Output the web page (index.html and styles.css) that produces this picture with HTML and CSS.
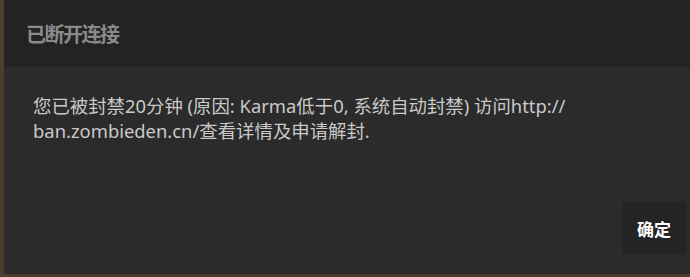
FILE: index.html
```html
<!DOCTYPE html>
<html lang="zh-CN">
<head>
  <meta charset="UTF-8" />
  <title>已断开连接</title>
  <meta name="viewport" content="width=device-width, initial-scale=1.0" />
  <link rel="stylesheet" href="styles.css">
</head>
<body>
  <div class="dialog">
    <div class="dialog-header">
      <h2>已断开连接</h2>
    </div>
    <div class="dialog-body">
      <p class="message">您已被封禁20分钟 (原因: Karma低于0, 系统自动封禁) 访问http://<wbr>ban.zombieden.cn/查看详情及申请解封.</p>
      <div class="actions">
        <button>确定</button>
      </div>
    </div>
  </div>
</body>
</html>
```

FILE: styles.css
```css
html, body {
  height: 100%;
}

body {
  margin: 0;
  background: #4b3d2f;
  font-family: "Noto Sans", "Noto Sans CJK SC", sans-serif;
  overflow: hidden;
}

.dialog {
  margin-left: 4px;
  height: 274px;
  display: flex;
  flex-direction: column;
  background: #2b2b2b;
}

.dialog-header {
  height: 67px;
  background: #232323;
  display: flex;
  align-items: center;
  padding-left: 22px;
  flex-shrink: 0;
}

.dialog-header h2 {
  margin: 0;
  font-size: 20px;
  font-weight: bold;
  letter-spacing: -1.5px;
  color: #8a8a8a;
  font-family: "Noto Sans CJK SC", sans-serif;
}

.dialog-body {
  flex: 1;
  display: flex;
  flex-direction: column;
  padding: 0 30px 0 29px;
}

.message {
  margin: 26px 0 0;
  font-size: 18.4px;
  line-height: 25px;
  color: #c9c9c9;
}

.actions {
  margin-top: auto;
  display: flex;
  justify-content: flex-end;
  margin-right: -26px;
  margin-bottom: 20px;
}

button {
  width: 64px;
  height: 52px;
  border: none;
  border-radius: 4px;
  background: #242424;
  color: #ffffff;
  font-size: 17px;
  font-weight: bold;
  font-family: "Noto Sans CJK SC", sans-serif;
  cursor: pointer;
}

button:hover {
  background: #1e1e1e;
}
```
